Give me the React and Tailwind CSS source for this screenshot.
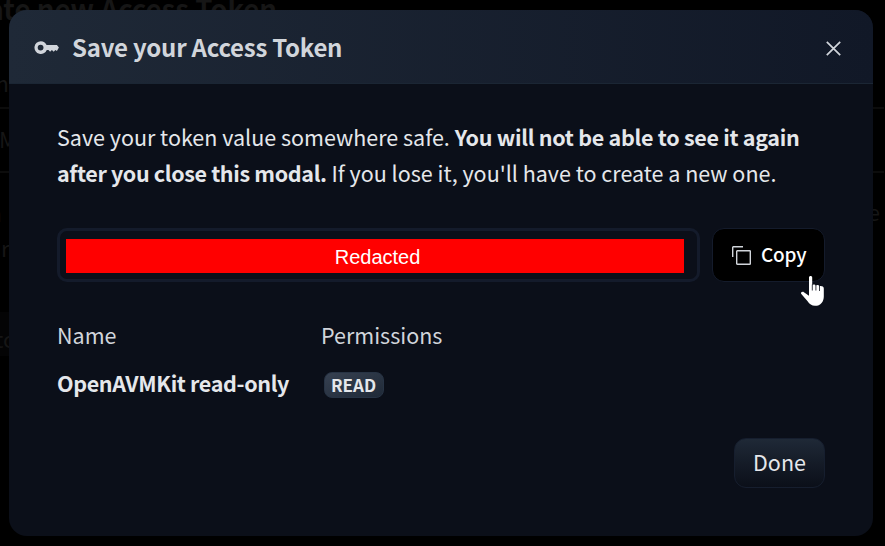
import React from "react";

const FONT = "font-['Noto_Sans_CJK_SC','Noto_Sans',sans-serif]";

function KeyIcon() {
  return (
    <svg className="h-[14px] w-[25px] shrink-0" viewBox="0 0 25 14" fill="currentColor">
      <path
        fillRule="evenodd"
        d="M6.8.2a6.4 6.4 0 1 0 6 8.8h1.7l1.6 1.7 1.8-1.7 1.8 1.7 1.7-1.7 1.5 1.1 2-3.7-2-2.4H12.6A6.4 6.4 0 0 0 6.8.2Zm-.2 3.5a2.9 2.9 0 1 1 0 5.8 2.9 2.9 0 0 1 0-5.8Z"
      />
    </svg>
  );
}

function CloseIcon() {
  return (
    <svg className="h-[15px] w-[15px]" viewBox="0 0 15 15" fill="none" stroke="currentColor" strokeWidth="1.7">
      <path d="M.8.8l13.4 13.4M14.2.8.8 14.2" />
    </svg>
  );
}

function CopyIcon() {
  return (
    <svg className="h-[19px] w-[19px] shrink-0" viewBox="0 0 19 19" fill="none" stroke="currentColor" strokeWidth="1.4">
      <rect x="4.7" y="4.7" width="13.6" height="13.6" rx=".6" />
      <path d="M.7 11V1.3a.6.6 0 0 1 .6-.6H11" />
    </svg>
  );
}

function HandCursor() {
  return (
    <svg className="absolute left-[800px] top-[275px] h-[32px] w-[26px]" viewBox="0 0 26 32">
      <path
        fill="#fff"
        d="M9 2.6C9 .6 12.2.6 12.2 2.6v7.6c.8-1.1 3.2-.8 3.6.5.8-1 3.2-.7 3.6.7 1-.8 4.4-.4 4.4 2.1v7.9c0 5-3 9.4-8.8 9.4-3.3 0-5.5-1.7-7.4-4.5L1.1 18.8c-.6-1.4 1.4-2.5 2.8-1.6L9 20.8Z"
      />
      <path stroke="#0b0f19" strokeWidth=".8" d="M12.3 9.5v6M15.9 10.2v5.3M19.5 11v5" />
    </svg>
  );
}

// Form sitting under the dimmed backdrop
function PageBehind() {
  return (
    <div className="absolute inset-0 overflow-hidden bg-black text-[22px] leading-[36px] text-[#161616]">
      <div className="absolute -top-[10px] right-[608px] whitespace-nowrap text-[27.6px] font-bold">Create new Access Token</div>
      <div className="absolute right-[876px] top-[64px] whitespace-nowrap">Token nam</div>
      <div className="absolute -left-4 top-[107px] h-[66px] w-[900px] border-y-2 border-[#0c0c0c] pl-[15px] leading-[58px]">My token</div>
      <div className="absolute right-[883px] top-[194px]">n</div>
      <div className="absolute left-[1px] top-[229px]">r</div>
      <div className="absolute right-[5px] top-[193px]">e</div>
      <div className="absolute -left-4 top-[312px] h-[44px] w-8 bg-[#040405]" />
      <div className="absolute -left-[5px] top-[320px]">to</div>
    </div>
  );
}

function ModalHeader() {
  return (
    <header className="flex h-[74px] items-center border-b border-[#1b2634] bg-linear-to-r from-[#1f2937] to-[#111827] pl-[25px] pr-[32px] pt-[2px] text-[#d1d5db]">
      <KeyIcon />
      <h2 className="mb-[2px] ml-[13px] flex-1 whitespace-nowrap text-[24px] font-bold leading-[36px] tracking-[-0.24px]">
        Save your Access Token
      </h2>
      <button aria-label="Close" className="pt-px">
        <CloseIcon />
      </button>
    </header>
  );
}

function TokenRow() {
  return (
    <div className="mt-[37px] flex gap-[12px]">
      <div className="flex h-[54px] w-[643px] items-center rounded-[10px] border-3 border-[#141b2b] pl-[6px] pr-[13px] pt-px">
        <div className="flex h-[34px] flex-1 items-center justify-center bg-[#ff0000] pl-[5px] pt-[3px] font-['Liberation_Sans',Arial,sans-serif] text-[20px] text-white">
          Redacted
        </div>
      </div>
      <button className="flex h-[54px] w-[113px] items-center rounded-[12px] border border-[#141b2b] bg-black pl-[19px] text-[19px] font-medium text-white">
        <span className="text-[#d1d5db]">
          <CopyIcon />
        </span>
        <span className="mb-[2px] ml-[10px] tracking-[-0.2px]">Copy</span>
      </button>
    </div>
  );
}

function TokenDetails() {
  return (
    <div className="mt-[35px] grid grid-cols-[264px_1fr] text-[21.5px] leading-[36px]">
      <div className="text-[#d1d5db]">Name</div>
      <div className="text-[#d1d5db]">Permissions</div>
      <div className="mt-[12px] whitespace-nowrap font-bold tracking-[-0.35px]">OpenAVMKit read-only</div>
      <div className="mt-[15px] flex items-center pl-[3px]">
        <span className="flex h-[26px] w-[60px] items-center justify-center rounded-[8px] border border-[#273344] bg-linear-to-br from-[#374151] to-[#1f2937] pr-px text-[17px] font-bold leading-none">
          READ
        </span>
      </div>
    </div>
  );
}

export default function App() {
  return (
    <div className={`relative h-[546px] w-[885px] overflow-hidden bg-black ${FONT}`}>
      <PageBehind />
      <div className="relative pl-[9px] pt-[10px]">
        <section className="flex h-[526px] w-[864px] flex-col overflow-hidden rounded-[18px] bg-[#0b0f19] text-[#e5e7eb]">
          <ModalHeader />
          <div className="flex flex-1 flex-col px-[48px] pt-[35px]">
            <p className="whitespace-nowrap text-[21.5px] leading-[36px]">
              Save your token value somewhere safe.{" "}
              <b className="tracking-[-0.29px]">You will not be able to see it again</b>
              <br />
              <b className="tracking-[-0.35px]">after you close this modal.</b> If you lose it, you'll have to create a new one.
            </p>
            <TokenRow />
            <TokenDetails />
            <button className="mt-[37px] h-[50px] w-[91px] self-end rounded-[12px] border border-[#161e2e] bg-linear-to-b from-[#1f2937] to-[#0b0f19] pb-[2px] text-[21.5px]">
              Done
            </button>
          </div>
        </section>
      </div>
      <HandCursor />
    </div>
  );
}
